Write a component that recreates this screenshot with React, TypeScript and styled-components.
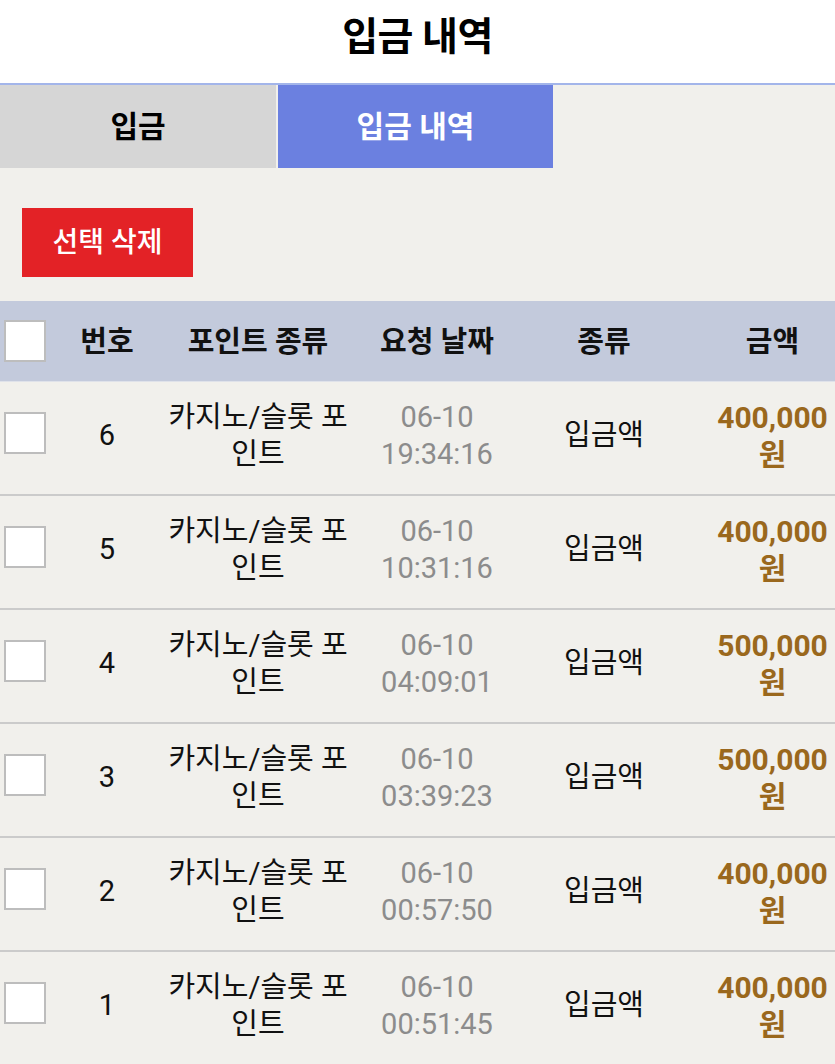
import React from "react";
import styled, { createGlobalStyle } from "styled-components";

const Global = createGlobalStyle`
  html, body { margin: 0; padding: 0; }
  body {
    background: #f1f0ec;
    font-family: Roboto, "Noto Sans CJK KR", "Noto Sans", sans-serif;
    color: #111;
  }
`;

const Page = styled.div`
  width: 835px;
  min-height: 1064px;
  background: #f1f0ec;
`;

const TitleBar = styled.header`
  height: 83px;
  background: #ffffff;
  display: flex;
  align-items: center;
  justify-content: center;
  border-bottom: 2px solid #a3b5ea;
`;

const Title = styled.h1`
  margin: 0;
  font-size: 39px;
  font-weight: 700;
  color: #000;
  letter-spacing: -0.5px;
  transform: translateY(-9px);
`;

const Tabs = styled.nav`
  display: flex;
  height: 83px;
  gap: 2px;
`;

const Tab = styled.div<{ $active?: boolean }>`
  width: ${(p) => (p.$active ? 275 : 276)}px;
  display: flex;
  align-items: center;
  justify-content: center;
  background: ${(p) => (p.$active ? "#6b80e0" : "#d6d6d6")};
  color: ${(p) => (p.$active ? "#ffffff" : "#000000")};
  font-size: 30px;
  font-weight: 700;
  padding-bottom: 6px;
  box-sizing: border-box;
`;

const Toolbar = styled.div`
  padding: 40px 22px 24px;
`;

const DeleteButton = styled.button`
  width: 171px;
  height: 69px;
  border: none;
  background: #e32226;
  color: #fff;
  font-family: inherit;
  font-size: 28px;
  font-weight: 500;
  padding: 0 0 6px;
  cursor: pointer;
`;

const cols = "52px 110px 192px 166px 168px 147px";

const HeadRow = styled.div`
  display: grid;
  grid-template-columns: ${cols};
  height: 80px;
  background: #c3cadc;
  align-items: center;
  border-bottom: 1px solid #dfe2ea;
`;

const HeadCell = styled.div<{ $shift?: number }>`
  text-align: center;
  font-size: 29px;
  font-weight: 700;
  color: #111;
  padding-left: ${(p) => p.$shift ?? 0}px;
  padding-bottom: 4px;
`;

const Row = styled.div`
  display: grid;
  grid-template-columns: ${cols};
  align-items: center;
  border-bottom: 2px solid #cbcbcb;
  padding-bottom: 5px;
  box-sizing: content-box;
  height: 107px;
`;

const Cell = styled.div<{ $tone?: "date" | "amount"; $shift?: number }>`
  text-align: center;
  font-size: ${(p) => (p.$tone === "amount" ? 30 : 29)}px;
  line-height: 37px;
  font-weight: ${(p) => (p.$tone === "amount" ? 700 : 400)};
  color: ${(p) =>
    p.$tone === "date" ? "#8c8c8c" : p.$tone === "amount" ? "#9a681d" : "#111"};
  padding-left: ${(p) => p.$shift ?? 0}px;
  white-space: pre-line;
`;

const CheckCell = styled.div<{ $lift?: number }>`
  padding-left: 4px;
  padding-bottom: ${(p) => p.$lift ?? 0}px;
  display: flex;
  align-items: center;
`;

const Box = styled.span`
  display: block;
  width: 42px;
  height: 42px;
  box-sizing: border-box;
  background: #fff;
  border: 2px solid #bdbdbd;
`;

const rows = [
  { n: 6, time: "19:34:16", amt: "400,000" },
  { n: 5, time: "10:31:16", amt: "400,000" },
  { n: 4, time: "04:09:01", amt: "500,000" },
  { n: 3, time: "03:39:23", amt: "500,000" },
  { n: 2, time: "00:57:50", amt: "400,000" },
  { n: 1, time: "00:51:45", amt: "400,000" },
];

export default function App() {
  return (
    <Page>
      <Global />
      <TitleBar>
        <Title>입금 내역</Title>
      </TitleBar>
      <Tabs>
        <Tab>입금</Tab>
        <Tab $active>입금 내역</Tab>
      </Tabs>
      <Toolbar>
        <DeleteButton>선택 삭제</DeleteButton>
      </Toolbar>
      <HeadRow>
        <CheckCell>
          <Box />
        </CheckCell>
        <HeadCell>번호</HeadCell>
        <HeadCell>포인트 종류</HeadCell>
        <HeadCell>요청 날짜</HeadCell>
        <HeadCell>종류</HeadCell>
        <HeadCell $shift={22}>금액</HeadCell>
      </HeadRow>
      {rows.map((r) => (
        <Row key={r.n}>
          <CheckCell $lift={6}>
            <Box />
          </CheckCell>
          <Cell>{r.n}</Cell>
          <Cell>{"카지노/슬롯 포\n인트"}</Cell>
          <Cell $tone="date">{"06-10\n" + r.time}</Cell>
          <Cell>입금액</Cell>
          <Cell $tone="amount" $shift={22}>
            {r.amt + "\n원"}
          </Cell>
        </Row>
      ))}
    </Page>
  );
}
